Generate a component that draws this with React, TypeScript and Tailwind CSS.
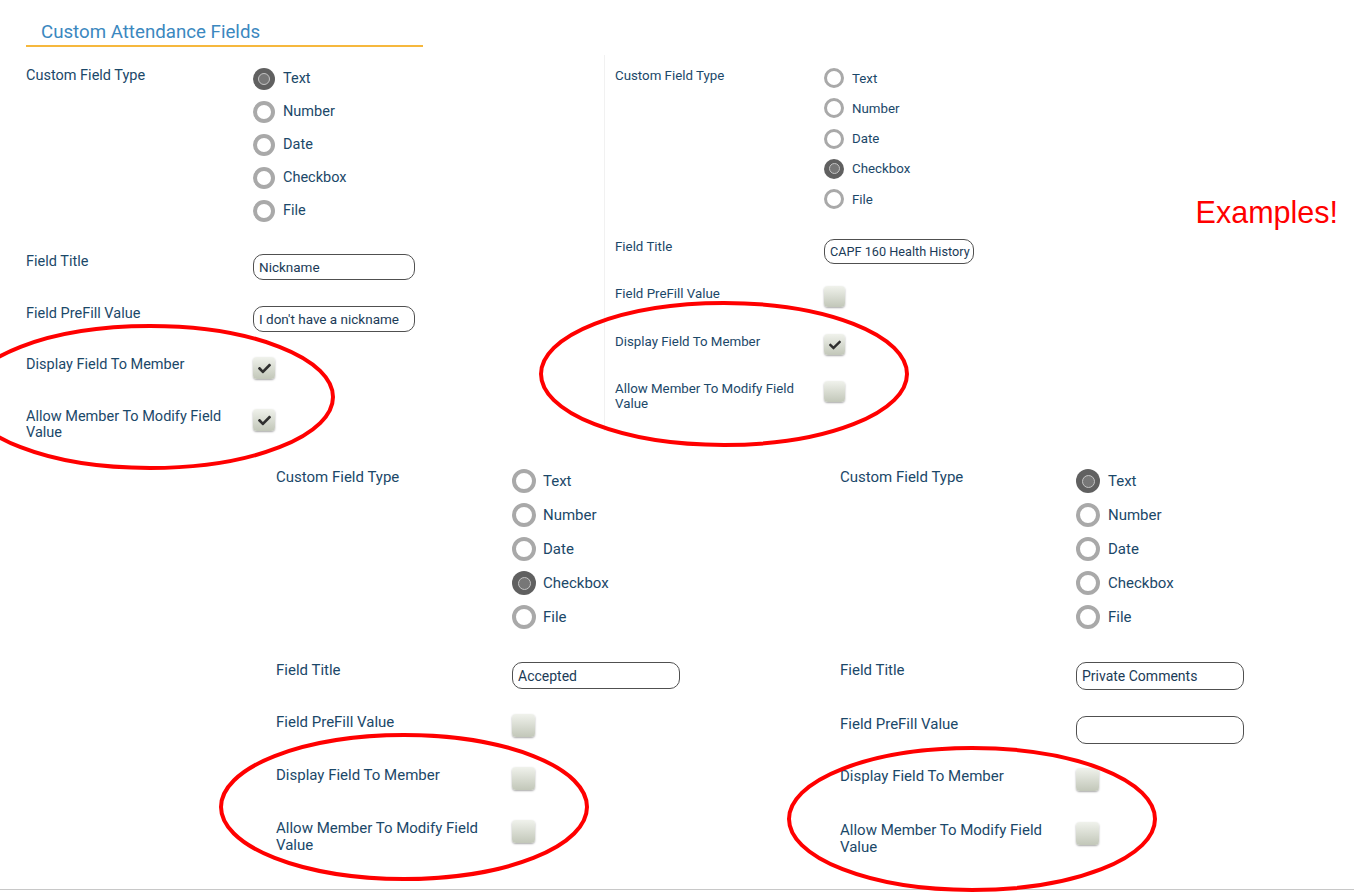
import { FaCheck } from 'react-icons/fa';

type Size = {
  text: string;
  labelW: string;
  radio: string;
  radioOn: string;
  dot: string;
  list: string;
  item: string;
  input: string;
  box: string;
  check: number;
  rows: string[];
};

// one size set per screenshot panel, they were pasted in at different zooms
const large: Size = {
  text: 'text-[14.5px] leading-[16px]',
  labelW: 'w-[227px]',
  radio: 'w-[22px] h-[22px] border-[4px]',
  radioOn: 'w-[22px] h-[22px]',
  dot: 'w-[12px] h-[12px]',
  list: 'gap-[11px]',
  item: 'h-[22px] gap-[8px]',
  input: 'w-[162px] h-[26px] text-[13.5px]',
  box: 'w-[22px] h-[22px]',
  check: 13,
  rows: ['h-[186px]', 'h-[52px]', 'h-[51px]', 'h-[52px]'],
};

const small: Size = {
  text: 'text-[13.3px] leading-[15px]',
  labelW: 'w-[209px]',
  radio: 'w-[20px] h-[20px] border-[3.5px]',
  radioOn: 'w-[20px] h-[20px]',
  dot: 'w-[11px] h-[11px]',
  list: 'gap-[10.25px]',
  item: 'h-[20px] gap-[8px]',
  input: 'w-[150px] h-[25px] text-[12.7px]',
  box: 'w-[21px] h-[21px]',
  check: 12,
  rows: ['h-[171px]', 'h-[47px]', 'h-[48px]', 'h-[47px]'],
};

const xl: Size = {
  text: 'text-[15px] leading-[17px]',
  labelW: 'w-[236px]',
  radio: 'w-[24px] h-[24px] border-[4.5px]',
  radioOn: 'w-[24px] h-[24px]',
  dot: 'w-[13px] h-[13px]',
  list: 'gap-[10px]',
  item: 'h-[24px] gap-[7px]',
  input: 'w-[168px] h-[27px] text-[14px]',
  box: 'w-[23px] h-[23px]',
  check: 14,
  rows: ['h-[193px]', 'h-[52px]', 'h-[53px]', 'h-[53px]'],
};

const xl2: Size = {
  ...xl,
  item: 'h-[24px] gap-[8px]',
  input: 'w-[168px] h-[28px] text-[14px]',
  rows: ['h-[193px]', 'h-[54px]', 'h-[52px]', 'h-[54px]'],
};

const TYPES = ['Text', 'Number', 'Date', 'Checkbox', 'File'];

function Radio({ on, s }: { on: boolean; s: Size }) {
  if (on) {
    return (
      <span className={`${s.radioOn} shrink-0 rounded-full bg-[#606060] flex items-center justify-center`}>
        <span className={`${s.dot} rounded-full border-[1.5px] border-[#c4c4c4] bg-[#777777]`} />
      </span>
    );
  }
  return <span className={`${s.radio} shrink-0 rounded-full border-[#a9a9a9] bg-white`} />;
}

function Box({ on, s }: { on: boolean; s: Size }) {
  return (
    <span
      className={`${s.box} rounded-[4px] bg-gradient-to-b from-[#f0f2ec] to-[#c2c7b9] shadow-[0_1px_2px_rgba(0,0,0,0.35)] flex items-center justify-center text-[#2f2f2f]`}
    >
      {on && <FaCheck size={s.check} />}
    </span>
  );
}

function TextInput({ value, s }: { value: string; s: Size }) {
  return (
    <input
      readOnly
      value={value}
      className={`${s.input} rounded-[10px] border border-[#505050] bg-white pl-[5px] text-[#1b3b57] outline-none`}
    />
  );
}

type PanelProps = {
  s: Size;
  type: string;
  title: string;
  prefill: string | boolean;
  display: boolean;
  allow: boolean;
};

function Panel({ s, type, title, prefill, display, allow }: PanelProps) {
  return (
    <div className={`${s.text} text-[#1b4869]`}>
      <div className={`flex ${s.rows[0]}`}>
        <div className={s.labelW}>Custom Field Type</div>
        <div className={`flex flex-col ${s.list}`}>
          {TYPES.map((t) => (
            <div key={t} className={`flex items-center ${s.item}`}>
              <Radio on={t === type} s={s} />
              <span>{t}</span>
            </div>
          ))}
        </div>
      </div>
      <div className={`flex ${s.rows[1]}`}>
        <div className={s.labelW}>Field Title</div>
        <TextInput value={title} s={s} />
      </div>
      <div className={`flex ${s.rows[2]}`}>
        <div className={s.labelW}>Field PreFill Value</div>
        {typeof prefill === 'string' ? <TextInput value={prefill} s={s} /> : <Box on={prefill} s={s} />}
      </div>
      <div className={`flex ${s.rows[3]}`}>
        <div className={s.labelW}>Display Field To Member</div>
        <Box on={display} s={s} />
      </div>
      <div className="flex">
        <div className={s.labelW}>
          Allow Member To Modify Field
          <br />
          Value
        </div>
        <Box on={allow} s={s} />
      </div>
    </div>
  );
}

export default function App() {
  return (
    <div className="relative w-[1354px] h-[892px] bg-white font-['Roboto',sans-serif] flex flex-col overflow-hidden">
      {/* Top row */}
      <div className="flex h-[468px]">
        <div className="w-[578px] ml-[26px] pt-[20px]">
          <div className="w-[397px] border-b-2 border-[#f6b83d] pl-[15px] pt-[1px] pb-[2px] text-[18.7px] leading-[22px] text-[#3b88bf]">
            Custom Attendance Fields
          </div>
          <div className="mt-[21px]">
            <Panel s={large} type="Text" title="Nickname" prefill="I don't have a nickname" display allow />
          </div>
        </div>
        <div className="self-start mt-[55px] border-l border-[#f1f1f1] pl-[10px] pt-[13px] pb-[20px]">
          <Panel s={small} type="Checkbox" title="CAPF 160 Health History" prefill={false} display allow={false} />
        </div>
        <div className="flex-1 flex justify-end pr-[16px] pt-[195px]">
          <span className="font-['Liberation_Sans',Arial,sans-serif] text-[30.5px] leading-[34px] text-[#ff0000]">
            Examples!
          </span>
        </div>
      </div>

      {/* Bottom row */}
      <div className="flex h-[421px] pl-[276px] pt-[1px]">
        <div className="w-[564px]">
          <Panel s={xl} type="Checkbox" title="Accepted" prefill={false} display={false} allow={false} />
        </div>
        <div>
          <Panel s={xl2} type="Text" title="Private Comments" prefill="" display={false} allow={false} />
        </div>
      </div>
      <div className="h-px bg-[#c8c8c8]" />

      {/* red annotation rings drawn over the shots */}
      <svg className="pointer-events-none absolute inset-0" width="1354" height="892" viewBox="0 0 1354 892">
        <g fill="none" stroke="#ff0000" strokeWidth="4">
          <ellipse cx="150" cy="397" rx="183" ry="71" />
          <ellipse cx="724" cy="374" rx="183" ry="71" />
          <ellipse cx="404" cy="807" rx="183" ry="72" />
          <ellipse cx="972" cy="819" rx="183" ry="71" />
        </g>
      </svg>
    </div>
  );
}
